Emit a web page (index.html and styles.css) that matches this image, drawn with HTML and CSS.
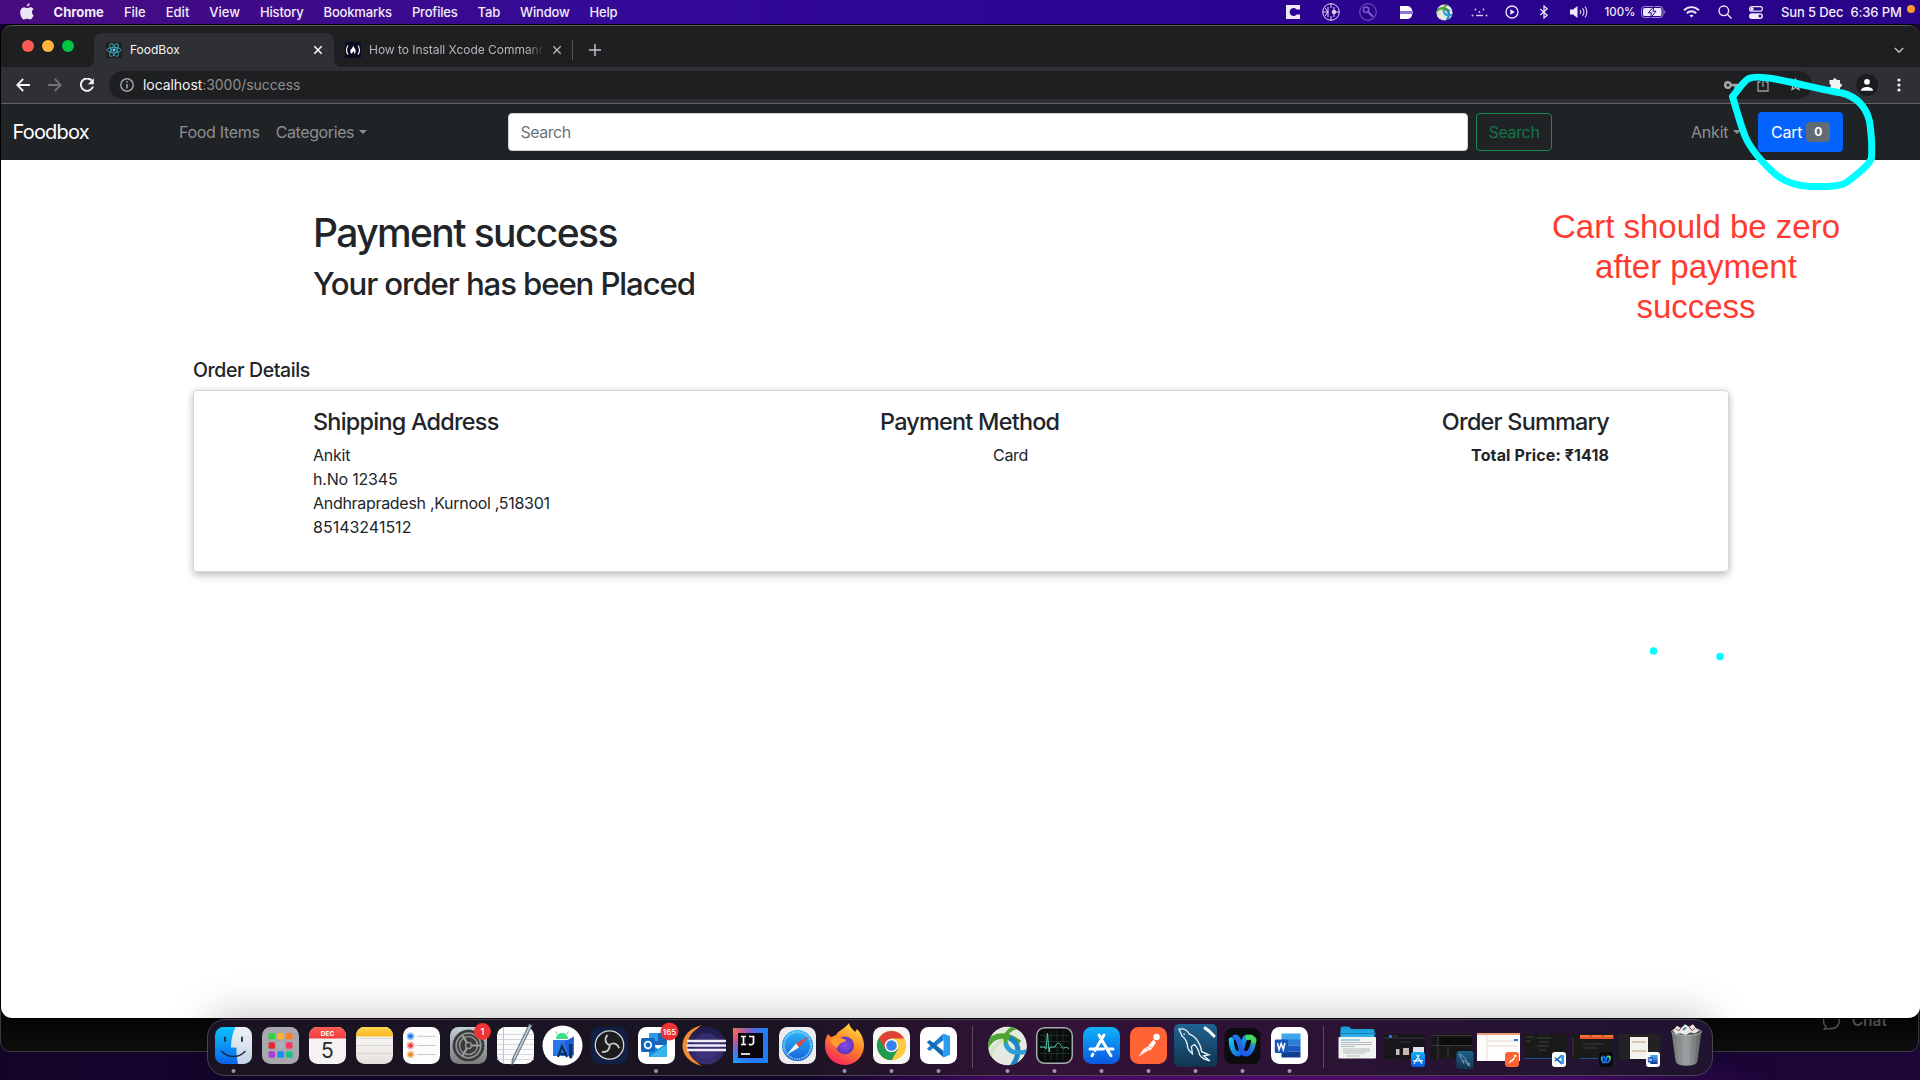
FILE: index.html
```html
<!DOCTYPE html>
<html lang="en">
<head>
<meta charset="utf-8">
<title>FoodBox</title>
<link rel="stylesheet" href="styles.css">
</head>
<body>
<svg class="defs" width="0" height="0" aria-hidden="true">
  <defs>
    <linearGradient id="gFinder" x1="0" y1="0" x2="0" y2="1"><stop offset="0" stop-color="#0cc4fb"/><stop offset="1" stop-color="#0a62ee"/></linearGradient>
    <linearGradient id="gFace" x1="0" y1="0" x2="0" y2="1"><stop offset="0" stop-color="#eef1f6"/><stop offset="1" stop-color="#c5d3e4"/></linearGradient>
    <linearGradient id="gPaper" x1="0" y1="0" x2="0" y2="1"><stop offset="0" stop-color="#ffffff"/><stop offset="1" stop-color="#e4e1dd"/></linearGradient>
    <linearGradient id="gYellow" x1="0" y1="0" x2="0" y2="1"><stop offset="0" stop-color="#fdd44f"/><stop offset="1" stop-color="#fbb91f"/></linearGradient>
    <linearGradient id="gRed" x1="0" y1="0" x2="0" y2="1"><stop offset="0" stop-color="#fb5a55"/><stop offset="1" stop-color="#f03d3c"/></linearGradient>
    <linearGradient id="gPrefs" x1="0" y1="0" x2="0" y2="1"><stop offset="0" stop-color="#c3d0d8"/><stop offset="1" stop-color="#7b7a78"/></linearGradient>
    <linearGradient id="gSafari" x1="0" y1="0" x2="0" y2="1"><stop offset="0" stop-color="#2bb8f7"/><stop offset="1" stop-color="#1463d8"/></linearGradient>
    <linearGradient id="gStore" x1="0" y1="0" x2="0" y2="1"><stop offset="0" stop-color="#0fb3fa"/><stop offset="1" stop-color="#0a58df"/></linearGradient>
    <linearGradient id="gIdea" x1="0" y1="0" x2="1" y2="1"><stop offset="0" stop-color="#fc7a3a"/><stop offset=".25" stop-color="#f23f8a"/><stop offset=".5" stop-color="#5a4df0"/><stop offset="1" stop-color="#0a8cf8"/></linearGradient>
    <linearGradient id="gIdea2" x1="1" y1="0" x2="0" y2="1"><stop offset="0" stop-color="#1486f7"/><stop offset=".55" stop-color="#1486f7" stop-opacity="0"/><stop offset="1" stop-color="#18a8ff"/></linearGradient>
    <linearGradient id="gFox" x1=".8" y1="0" x2=".3" y2="1"><stop offset="0" stop-color="#ffe246"/><stop offset=".45" stop-color="#ff8a27"/><stop offset="1" stop-color="#f5245e"/></linearGradient>
    <radialGradient id="gFoxCore"><stop offset="0" stop-color="#8a4cf0"/><stop offset="1" stop-color="#5b36b8"/></radialGradient>
    <linearGradient id="gSql" x1="0" y1="0" x2="0" y2="1"><stop offset="0" stop-color="#1f6391"/><stop offset="1" stop-color="#123450"/></linearGradient>
    <linearGradient id="gEcl" x1="0" y1="0" x2="0" y2="1"><stop offset="0" stop-color="#1f1b4a"/><stop offset="1" stop-color="#3a2f73"/></linearGradient>
    <linearGradient id="gWebexA" x1="0" y1="0" x2="1" y2="1"><stop offset="0" stop-color="#18c7e8"/><stop offset="1" stop-color="#1556ea"/></linearGradient>
    <linearGradient id="gWebexB" x1="0" y1="1" x2="1" y2="0"><stop offset="0" stop-color="#1a49e6"/><stop offset=".6" stop-color="#2376ee"/><stop offset="1" stop-color="#3bdc5c"/></linearGradient>
    <linearGradient id="gFolder" x1="0" y1="0" x2="0" y2="1"><stop offset="0" stop-color="#0f9ad9"/><stop offset="1" stop-color="#4bc6f4"/></linearGradient>
    <linearGradient id="gBin" x1="0" y1="0" x2="1" y2="0"><stop offset="0" stop-color="#6f7476"/><stop offset=".5" stop-color="#9a9fa0"/><stop offset="1" stop-color="#5b5f61"/></linearGradient>

    <symbol id="swirl" viewBox="0 0 40 40">
      <clipPath id="swirlClip"><circle cx="20" cy="20" r="19.500"/></clipPath>
      <g clip-path="url(#swirlClip)" fill="none">
        <circle cx="20" cy="20" r="19.500" fill="#e6e8e4"/>
        <path d="M3 30C8 14 18 12 26 16" stroke="#d2e3c8" stroke-width="4"/>
        <path d="M-2 23C3 8 18 6 32 17" stroke="#4fa332" stroke-width="5.500"/>
        <path d="M30 1C14 4 15 22 27 27" stroke="#4fa332" stroke-width="4"/>
        <path d="M22 12C34 18 32 30 24 41" stroke="#1b86c4" stroke-width="5"/>
        <path d="M18 17C20 27 30 28 42 25" stroke="#2b9fda" stroke-width="4.500"/>
      </g>
    </symbol>
    <symbol id="code" viewBox="0 0 28 28">
      <path d="M20 1l7 3v20l-7 3z" fill="#2b9df0"/>
      <path d="M20 1v7L5 20l-3-2.400L20 1z" fill="#1d7dcc"/>
      <path d="M20 27v-7L5 8 2 10.400 20 27z" fill="#0f69b5"/>
    </symbol>
    <symbol id="postman" viewBox="0 0 28 28">
      <circle cx="23" cy="4.500" r="3.600" fill="#fff"/>
      <path d="M19.500 7.500l3 3-5.500 8-7 3-7 5 5-8 5-3.500z" fill="#fff"/>
      <path d="M13 14l5 3M11 17l4 3" stroke="#ff6c37" stroke-width=".8"/>
    </symbol>
    <symbol id="astore" viewBox="0 0 28 28">
      <g fill="none" stroke="#fff" stroke-width="3" stroke-linecap="round">
        <path d="M16.500 3.500L7.500 19M11.500 3.500l10 17.500M2.500 17.500h13.500M20 17.500h5.500M5.500 22.500l-1 1.700M21.800 21.500l1.700 2.700"/>
      </g>
    </symbol>
    <symbol id="dolphin" viewBox="0 0 36 36">
      <path d="M2 3c5-1 8 1 10 5 6 2 11 9 12 17l7 3-5 1 6 5c-4-1-8-3-10-6-1-5-3-8-5-10l-3 2 1 7c-4-3-5-6-5-9-1-4-2-6-5-8-1-3-2-4-3-7z" fill="none" stroke="#e8f3fa" stroke-width="1.300"/>
      <circle cx="7" cy="8" r=".8" fill="#fff"/>
    </symbol>
    <symbol id="webex" viewBox="0 0 32 26">
      <g fill="none" stroke-width="5.500" stroke-linecap="round">
        <path d="M4 7c0 8 3 15 7 15 5 0 5-18 10-18" stroke="url(#gWebexA)"/>
        <path d="M8 4c6 0 5 18 11 18 5 0 8-7 9-15" stroke="url(#gWebexB)"/>
        <path d="M22 4.500c3-1 5 0 6 3" stroke="#3fdb5d"/>
      </g>
    </symbol>
    <symbol id="word" viewBox="0 0 28 26">
      <path d="M7 1h19v7H7z" fill="#41a5ee"/><path d="M7 7h19v6H7z" fill="#2b7cd3"/><path d="M7 13h19v6H7z" fill="#185abd"/><path d="M7 19h19v6H7z" fill="#103f91"/>
      <rect x="0" y="7" width="13.500" height="13.500" rx="1.500" fill="#1a56b8"/>
      <path d="M3 10.500l1.600 6.500 2.100-6 2.100 6 1.600-6.500" fill="none" stroke="#fff" stroke-width="1.500"/>
    </symbol>
  </defs>
</svg>

<header class="menubar">
  <svg class="apple" viewBox="0 0 14 17"><path d="M9.700.2c.1 1.700-1.300 3.300-2.900 3.300C6.600 1.900 8.100.4 9.700.2zM12 9c0-1.500.8-2.400 1.600-3-.8-1.200-2-1.700-3.100-1.700-1.400 0-2.200.8-3.200.8S5.200 4.300 4 4.300C1.900 4.400.2 6.200.2 9.400c0 3.400 2.200 7.100 3.900 7.100 1.100 0 1.600-.7 3-.7s1.800.7 2.900.7c1.600 0 3.100-2.600 3.600-4.200C12.600 11.700 12 10.500 12 9z" fill="#ece5f3"/></svg>
  <nav class="menus">
    <b class="menu chrome">Chrome</b><span class="menu">File</span><span class="menu">Edit</span><span class="menu">View</span><span class="menu">History</span><span class="menu">Bookmarks</span><span class="menu">Profiles</span><span class="menu">Tab</span><span class="menu">Window</span><span class="menu">Help</span>
  </nav>
  <div class="status">
    <svg width="14" height="14" viewBox="0 0 14 14"><path d="M0 0h14v4.500h-3.200a4 4 0 1 0 0 5H14V14H0z" fill="#ece8f8"/></svg>
    <svg width="18" height="18" viewBox="0 0 18 18" fill="none" stroke="#ded6f5"><circle cx="9" cy="9" r="8.300"/><path d="M9 1v4M9 13v4M14 9h3M6 4v10M12 4v10M1 9h5M3 5l3 4-3 4"/><circle cx="12" cy="9" r="1.800" fill="#ded6f5"/></svg>
    <svg width="18" height="18" viewBox="0 0 18 18" fill="none" stroke="#7a5fc4"><circle cx="9" cy="9" r="8.300"/><circle cx="7" cy="6.800" r="2.700" stroke-width="1.500"/><path d="M9 8.800l5 5" stroke-width="2"/></svg>
    <svg width="13" height="13" viewBox="0 0 13 13"><path d="M0 0h7c3 0 5 2 5.300 5H0zM0 8h12.300C12 11 10 13 7 13H0z" fill="#fff"/><path d="M0 5h13v3H0z" fill="#8f78cf"/></svg>
    <svg width="17" height="17"><use href="#swirl"/></svg>
    <svg width="17" height="9" viewBox="0 0 17 9" fill="#d8d0f2"><circle cx="4.500" cy="1.500" r=".9"/><circle cx="12.500" cy="1.500" r=".9"/><circle cx="8.500" cy="4" r=".9"/><circle cx="1.500" cy="7.500" r=".9"/><rect x="5" y="6.800" width="7" height="1.400"/><circle cx="15.500" cy="7.500" r=".9"/></svg>
    <svg width="14" height="14" viewBox="0 0 14 14"><circle cx="7" cy="7" r="6" fill="none" stroke="#ece8f8" stroke-width="1.300"/><path d="M5.300 4.200l4.600 2.800-4.600 2.800z" fill="#ece8f8"/></svg>
    <svg width="10" height="14" viewBox="0 0 10 14"><path d="M1.200 4l7 6.200L5 13V1l3.200 2.800-7 6.200" fill="none" stroke="#ece8f8" stroke-width="1.200"/></svg>
    <svg width="18" height="14" viewBox="0 0 18 14"><path d="M0 4.500h3L7.500 1v12L3 9.500H0z" fill="#ece8f8"/><path d="M10 5c.8 1.200.8 2.800 0 4M12.500 3.200c1.700 2.400 1.700 5.200 0 7.600M15 1.500c2.400 3.500 2.400 7.500 0 11" fill="none" stroke="#cfc5ee" stroke-width="1.200"/></svg>
    <span class="power"><span class="pct">100%</span><svg width="25" height="12" viewBox="0 0 25 12"><rect x=".5" y=".5" width="21.500" height="11" rx="3" fill="none" stroke="#9d8bd2"/><rect x="2" y="2" width="18.500" height="8" rx="1.500" fill="#ece8f8"/><path d="M13 0L7.500 6.800h3L9.500 12 15 5.200h-3z" fill="#ece8f8" stroke="#2a0593" stroke-width="1"/><path d="M23.300 4v4c1.300-.6 1.300-3.400 0-4z" fill="#9d8bd2"/></svg></span>
    <svg width="17" height="12" viewBox="0 0 17 12" fill="none" stroke="#ece8f8" stroke-width="1.900"><path d="M1 4.300c4.300-4.200 10.700-4.200 15 0M3.800 7.200c2.700-2.600 6.700-2.600 9.400 0"/><path d="M6.500 9.500c1.200-1.100 2.800-1.100 4 0l-2 2z" fill="#ece8f8" stroke="none"/></svg>
    <svg width="14" height="14" viewBox="0 0 14 14" fill="none" stroke="#ece8f8" stroke-width="1.400"><circle cx="5.800" cy="5.800" r="4.800"/><path d="M9.300 9.300l4.200 4.200"/></svg>
    <svg width="14" height="13" viewBox="0 0 14 13"><rect x=".6" y=".6" width="12.800" height="4.600" rx="2.300" fill="none" stroke="#ece8f8" stroke-width="1.200"/><circle cx="3" cy="2.900" r="1.700" fill="#ece8f8"/><rect y="7.200" width="14" height="5.800" rx="2.900" fill="#ece8f8"/><circle cx="11" cy="10.100" r="1.500" fill="#2a0593"/></svg>
    <span class="clock"><span>Sun 5 Dec</span><span>6:36 PM</span></span>
    <i class="mic"></i>
  </div>
</header>

<section class="backwin">
  <div class="chatbar"><svg width="19" height="19" viewBox="0 0 19 19"><path d="M3 15.500A8 8 0 1 1 7 17.500L1.500 18z" fill="none" stroke="#4c4c4c" stroke-width="1.600"/></svg><span>Chat</span></div>
</section>

<main class="browser">
  <div class="tabstrip">
    <div class="lights"><i class="red"></i><i class="amber"></i><i class="green"></i></div>
    <div class="tab active">
      <svg width="16" height="16" viewBox="0 0 16 16"><rect width="16" height="16" rx="1.500" fill="#1d2023"/><g fill="none" stroke="#3fa9bf" stroke-width=".9"><ellipse cx="8" cy="8" rx="7" ry="2.700"/><ellipse cx="8" cy="8" rx="7" ry="2.700" transform="rotate(60 8 8)"/><ellipse cx="8" cy="8" rx="7" ry="2.700" transform="rotate(120 8 8)"/></g><circle cx="8" cy="8" r="1.400" fill="#61dafb"/></svg>
      <span class="tabname">FoodBox</span>
      <svg class="close" width="10" height="10" viewBox="0 0 10 10"><path d="M1.300 1.300l7.400 7.400M8.700 1.300L1.300 8.700" stroke="#fff" stroke-width="1.500"/></svg>
    </div>
    <div class="tab idle">
      <svg width="16" height="16" viewBox="0 0 16 16"><rect width="16" height="16" fill="#0a0a23"/><path d="M3 3.500C1 6 1 10 3 12.500M13 3.500c2 2.500 2 6.500 0 9" fill="none" stroke="#fff" stroke-width="1.200"/><path d="M8 3.500c.5 2 2.700 3 2.700 5.500 0 1.600-.7 2.500-1.700 3 .6-1.200.2-2-.6-2.700-.8 1-1.600 1.500-1 2.700C6 11.500 5.300 10.600 5.300 9.300 5.300 7 8 6.500 8 3.500z" fill="#fff"/></svg>
      <span class="tabname">How to Install Xcode Command</span>
      <svg class="close" width="10" height="10" viewBox="0 0 10 10"><path d="M1.300 1.300l7.400 7.400M8.700 1.300L1.300 8.700" stroke="#b8babd" stroke-width="1.300"/></svg>
    </div>
    <i class="tabline"></i>
    <svg class="plus" width="12" height="12" viewBox="0 0 12 12"><path d="M6 0v12M0 6h12" stroke="#c3c5c8" stroke-width="1.500"/></svg>
    <svg class="chev" width="10" height="7" viewBox="0 0 10 7"><path d="M.8 1l4.200 4.300L9.200 1" fill="none" stroke="#bcbec1" stroke-width="1.500"/></svg>
  </div>
  <div class="toolbar">
    <span class="tool"><svg width="14" height="14" viewBox="0 0 14 14" fill="none" stroke="#f1f3f4" stroke-width="1.800"><path d="M14 7H1.500M7.200 1L1.200 7l6 6"/></svg></span>
    <span class="tool"><svg width="14" height="14" viewBox="0 0 14 14" fill="none" stroke="#707276" stroke-width="1.800"><path d="M0 7h12.500M6.800 1l6 6-6 6"/></svg></span>
    <span class="tool"><svg width="14" height="14" viewBox="0 0 14 14"><path d="M11.700 2.500A6.200 6.200 0 1 0 13 8.500" fill="none" stroke="#f1f3f4" stroke-width="1.900"/><path d="M13.800.3v6H7.900z" fill="#f1f3f4"/></svg></span>
    <div class="omnibox">
      <svg width="14" height="14" viewBox="0 0 14 14"><circle cx="7" cy="7" r="6.200" fill="none" stroke="#9aa0a6" stroke-width="1.500"/><path d="M7 6v4.500M7 3.300v1.500" stroke="#9aa0a6" stroke-width="1.600"/></svg>
      <span class="url"><span class="host">localhost</span>:3000/success</span>
      <span class="tool"><svg width="14" height="8" viewBox="0 0 14 8"><path d="M4 0a4 4 0 1 0 3.700 5.300h2.600V8h2.400V5.300H14V2.700H7.700A4 4 0 0 0 4 0zm0 2.500a1.500 1.500 0 1 1 0 3 1.500 1.500 0 0 1 0-3z" fill="#a5a7aa"/></svg></span>
      <span class="tool"><svg width="12" height="15" viewBox="0 0 12 15" fill="none" stroke="#9b9da0" stroke-width="1.300"><path d="M3.500 5H1v9h10V5H8.500M6 10V1M3.500 3.300L6 1l2.500 2.300"/></svg></span>
      <span class="tool"><svg width="13" height="13" viewBox="0 0 13 13"><path d="M6.500 1l1.600 3.700 4 .3-3 2.700.9 3.900-3.500-2.100L3 11.600l.9-3.900-3-2.700 4-.3z" fill="none" stroke="#b3b5b8" stroke-width="1.200"/></svg></span>
    </div>
    <span class="tool ext"><svg width="15" height="15" viewBox="0 0 15 15"><path d="M5 3a1.800 1.800 0 0 1 3.600 0H12v3.400a1.900 1.900 0 0 1 0 3.800V14H8.500a1.700 1.700 0 0 0-3.400 0H1.500v-3.500a1.800 1.800 0 0 0 0-3.500V3z" fill="#f1f3f4"/></svg></span>
    <span class="tool"><svg width="22" height="22" viewBox="0 0 22 22"><circle cx="11" cy="11" r="11" fill="#1b1c1e"/><circle cx="11" cy="7.800" r="2.900" fill="#fff"/><path d="M5 16.800c0-5 12-5 12 0z" fill="#fff"/></svg></span>
    <span class="tool"><svg width="4" height="14" viewBox="0 0 4 14" fill="#f1f3f4"><circle cx="2" cy="2" r="1.600"/><circle cx="2" cy="7" r="1.600"/><circle cx="2" cy="12" r="1.600"/></svg></span>
  </div>

  <div class="page">
    <nav class="navbar">
      <span class="brand">Foodbox</span>
      <div class="links"><span class="items">Food Items</span><span class="drop cats">Categories</span></div>
      <div class="field">Search</div>
      <div class="btn-outline">Search</div>
      <span class="drop user">Ankit</span>
      <div class="cart"><span class="cart-label">Cart</span><span class="badge">0</span></div>
    </nav>
    <div class="headline">
      <h1>Payment success</h1>
      <h2>Your order has been Placed</h2>
    </div>
    <section class="order">
      <h5>Order Details</h5>
      <div class="card">
        <div class="ship"><h4>Shipping Address</h4><p class="name">Ankit</p><p class="house">h.No 12345</p><p class="region">Andhrapradesh ,Kurnool ,518301</p><p>85143241512</p></div>
        <div class="pay"><h4>Payment Method</h4><p class="method">Card</p></div>
        <div class="sum"><h4>Order Summary</h4><p class="total">Total Price: ₹1418</p></div>
      </div>
    </section>
  </div>
</main>

<footer class="dock">
  <svg class="app" viewBox="0 0 47 56"><clipPath id="fc"><rect x="5" y="8" width="37" height="37" rx="8.500"/></clipPath><g clip-path="url(#fc)"><rect x="5" y="8" width="37" height="37" fill="url(#gFinder)"/><path d="M25.500 8C22.500 14 21 21 21 28.500h5.500c-.3 6 .3 11 1.500 16.500h14V8z" fill="url(#gFace)"/></g><path d="M15 18.500v3.500M32 18.500v3.500" stroke="#1b2b45" stroke-width="1.800" stroke-linecap="round"/><path d="M12 32.500c6.500 6.800 16.500 6.800 23 0" fill="none" stroke="#1b2b45" stroke-width="1.500" stroke-linecap="round"/><circle cx="23.500" cy="52" r="2" fill="#9b94a6"/></svg>
  <svg class="app" viewBox="0 0 47 56"><rect x="5" y="8" width="37" height="37" rx="8.500" fill="#a9a8ae"/><g><rect x="11.500" y="14" width="6.500" height="6.500" rx="1.500" fill="#30d13f"/><rect x="20.300" y="14" width="6.500" height="6.500" rx="1.500" fill="#fdb52c"/><rect x="29" y="14" width="6.500" height="6.500" rx="1.500" fill="#fc7f28"/><rect x="11.500" y="23.200" width="6.500" height="6.500" rx="1.500" fill="#e02b2f"/><rect x="20.300" y="23.200" width="6.500" height="6.500" rx="1.500" fill="#a6b6bf"/><rect x="29" y="23.200" width="6.500" height="6.500" rx="1.500" fill="#f9385f"/><rect x="11.500" y="32.300" width="6.500" height="6.500" rx="1.500" fill="#a740cf"/><rect x="20.300" y="32.300" width="6.500" height="6.500" rx="1.500" fill="#138ff5"/><rect x="29" y="32.300" width="6.500" height="6.500" rx="1.500" fill="#16c28e"/></g></svg>
  <svg class="app" viewBox="0 0 47 56"><rect x="5" y="8" width="37" height="37" rx="8.500" fill="#f5f3f1"/><path d="M5 19.500v-3A8.500 8.500 0 0 1 13.500 8h20a8.500 8.500 0 0 1 8.500 8.500v3z" fill="url(#gRed)"/><text x="23.500" y="16.500" class="cal-m">DEC</text><text x="23.500" y="38.500" class="cal-d">5</text></svg>
  <svg class="app" viewBox="0 0 47 56"><rect x="5" y="8" width="37" height="37" rx="8.500" fill="url(#gPaper)"/><path d="M5 17.500v-1A8.500 8.500 0 0 1 13.500 8h20a8.500 8.500 0 0 1 8.500 8.500v1z" fill="url(#gYellow)"/><path d="M5 19.300h37" stroke="#b9b5ae" stroke-dasharray="1 1"/><path d="M5 26.500h37M5 34.500h37" stroke="#d9d5cf"/></svg>
  <svg class="app" viewBox="0 0 47 56"><rect x="5" y="8" width="37" height="37" rx="8.500" fill="#fdfdfd"/><path d="M19 17.300h19M19 26.500h19M19 35.500h19" stroke="#c9c9c9"/><g stroke-width="1"><circle cx="12.500" cy="17.300" r="2.500" fill="#1f7cf0"/><circle cx="12.500" cy="17.300" r="3.500" fill="none" stroke="#8db9f0"/><circle cx="12.500" cy="26.500" r="2.500" fill="#ee4444"/><circle cx="12.500" cy="26.500" r="3.500" fill="none" stroke="#f2a5a5"/><circle cx="12.500" cy="35.500" r="2.500" fill="#f38b2b"/><circle cx="12.500" cy="35.500" r="3.500" fill="none" stroke="#f6c593"/></g></svg>
  <svg class="app" viewBox="0 0 47 56"><rect x="5" y="8" width="37" height="37" rx="8.500" fill="url(#gPrefs)"/><circle cx="23.500" cy="26.500" r="15.500" fill="#39393a" stroke="#2a2b2c" stroke-dasharray="1.500 1"/><circle cx="23.500" cy="26.500" r="12.300" fill="none" stroke="#8f9193" stroke-width="1.800"/><circle cx="23.500" cy="26.500" r="9" fill="none" stroke="#8f9193" stroke-width="1.500"/><circle cx="23.500" cy="26.500" r="3" fill="#39393a" stroke="#8f9193" stroke-width="1.500"/><path d="M26.500 26.500h9M22 24l-4.500-7.800M22 29l-4.500 7.800" stroke="#9b9d9f" stroke-width="2.200"/><circle cx="37.500" cy="12.500" r="8.500" fill="#ee3433"/><text x="37.500" y="16" class="bubble">1</text></svg>
  <svg class="app" viewBox="0 0 47 56"><rect x="5" y="8" width="37" height="37" rx="8.500" fill="#fbfbfb"/><path d="M5 15.500h37M5 20.500h37M5 25.500h37M5 30.500h37M5 35.500h37M5 40.500h37" stroke="#d5d8dc"/><path d="M11.500 8v37" stroke="#f0b0b0"/><path d="M37.300 5l2.700 1.500-17 34.500-3.200 5 .5-6z" fill="#8b9fb0" stroke="#55636f" stroke-width=".8"/><path d="M38 7L22 40" stroke="#d9e5ee" stroke-width="1"/></svg>
  <svg class="app" viewBox="0 0 47 56"><circle cx="23.500" cy="26.500" r="20" fill="#fff"/><path d="M14 21h18l3-4v19l-3 1H14z" fill="#2b78ee"/><path d="M25 23l9-5v18l-4 2z" fill="#1a5fd6"/><path d="M17 20c0-8 12-8 12 0z" fill="#3ddc84"/><path d="M18 15l-1.500-2.500M28 15l1.500-2.500" stroke="#3ddc84"/><path d="M19 38l4-11 5 11M19.500 33.500c3 2 6 2 8 0" fill="none" stroke="#0b2c4c" stroke-width="2"/><path d="M30 25h3.500v13l-1.500 2-2-2z" fill="#0b3558"/></svg>
  <svg class="app" viewBox="0 0 47 56"><rect x="5" y="8" width="37" height="37" rx="8.500" fill="#101f42"/><circle cx="23.500" cy="26" r="14.200" fill="#1d1c1e" stroke="#d5d5d7" stroke-width="1.300"/><g fill="none" stroke="#c9c9cb" stroke-width="1.800"><path d="M23.500 26c-5-2-5-7-2-10"/><path d="M23.500 26c-5-2-5-7-2-10" transform="rotate(120 23.500 26)"/><path d="M23.500 26c-5-2-5-7-2-10" transform="rotate(240 23.500 26)"/></g></svg>
  <svg class="app" viewBox="0 0 47 56"><rect x="5" y="8" width="37" height="37" rx="8.500" fill="#fff"/><path d="M16 14h18v12H16z" fill="#1766b8"/><path d="M16 14h9v8h-9z" fill="#2f9be6"/><path d="M34 24v14H16V24l9 6z" fill="#1490df"/><path d="M16 38l18-13v13z" fill="#45c0f5" opacity=".7"/><rect x="8" y="19" width="14" height="14" rx="1.500" fill="#1068c0"/><circle cx="15" cy="26" r="3.300" fill="none" stroke="#fff" stroke-width="1.700"/><circle cx="36.500" cy="12.500" r="9" fill="#ee3433"/><text x="36.500" y="15.700" class="bubble wide">165</text><circle cx="23" cy="52" r="2" fill="#9b94a6"/></svg>
  <svg class="app" viewBox="0 0 47 56"><path d="M22 6C-4 12-4 41 22 47 7 38 7 15 22 6z" fill="#f28a32"/><circle cx="26.500" cy="26.500" r="19" fill="url(#gEcl)"/><circle cx="26.500" cy="27" r="13" fill="#45398c" opacity=".5"/><path d="M7 22h39M6.500 26.500h39.500M7 31h39" stroke="#f0edf8" stroke-width="2.300"/></svg>
  <svg class="app" viewBox="0 0 47 56"><rect x="6" y="9" width="35" height="35" fill="url(#gIdea)"/><rect x="6" y="9" width="35" height="35" fill="url(#gIdea2)"/><rect x="11" y="14" width="25" height="25" fill="#09060b"/><path d="M14 17.500h5M16.500 17.500v8M14 25.500h5M22 17.500h4.500v6c0 2-2.500 3-4.500 1.500" fill="none" stroke="#fff" stroke-width="1.700"/><path d="M14 35h9" stroke="#fff" stroke-width="1.700"/></svg>
  <svg class="app" viewBox="0 0 47 56"><rect x="5" y="8" width="37" height="37" rx="8.500" fill="#ececee"/><circle cx="23.500" cy="26.500" r="15.500" fill="url(#gSafari)"/><circle cx="23.500" cy="26.500" r="13.500" fill="none" stroke="#d6efff" stroke-width="2" stroke-dasharray=".6 1.100"/><path d="M34.500 17.500L22 24.500l3 4z" fill="#ee4338"/><path d="M12.500 36L22 24.500l3 4z" fill="#f3f5f7"/></svg>
  <svg class="app" viewBox="0 0 47 56"><path d="M4 26c0-5 1-8 3-11l3 3 5-2c2-4 6-5 9-8 2-1 3-3 4-4 1 5 4 6 6 9l2-3c5 5 7 11 7 17A19.500 19.500 0 0 1 4 26z" fill="url(#gFox)"/><circle cx="24" cy="26.500" r="9" fill="url(#gFoxCore)"/><path d="M9 20c5-3 10-2 13 0 3 0 4 2 1 3-3 0-5 2-7 6-3-2-6-4-7-9z" fill="#ff9a2b"/><circle cx="23.500" cy="52" r="2" fill="#9b94a6"/></svg>
  <svg class="app" viewBox="0 0 47 56"><rect x="5" y="8" width="37" height="37" rx="8.500" fill="#f6f6f6"/><circle cx="23.500" cy="26.500" r="14.700" fill="#fdca42"/><path d="M23.500 26.500L10.800 19.200A14.700 14.700 0 0 0 23.500 41.200l6.400-11z" fill="#1e9b52"/><path d="M10.800 19.200A14.700 14.700 0 0 1 36.200 19.500H23.500l-6.300 10.600z" fill="#dd4337"/><circle cx="23.500" cy="26.500" r="6.800" fill="#fff"/><circle cx="23.500" cy="26.500" r="5.300" fill="#3a7ff0"/><circle cx="23.500" cy="52" r="2" fill="#9b94a6"/></svg>
  <svg class="app" viewBox="0 0 47 56"><rect x="5" y="8" width="37" height="37" rx="8.500" fill="#fff"/><use href="#code" x="10" y="13.500" width="26" height="26"/><circle cx="23.500" cy="52" r="2" fill="#9b94a6"/></svg>
  <i class="sep"></i>
  <svg class="app" viewBox="0 0 47 56"><use href="#swirl" x="3.500" y="7" width="40" height="40"/><circle cx="23.500" cy="52" r="2" fill="#a394b0"/></svg>
  <svg class="app" viewBox="0 0 47 56"><rect x="5.700" y="8.700" width="35.600" height="35.600" rx="8" fill="#0b0d0d" stroke="#a5acae" stroke-width="1.500"/><path d="M9 16.500h29M9 22.500h29M9 28.500h29M9 34.500h29M14 12v29M20 12v29M26 12v29M32 12v29" stroke="#24403b" stroke-width=".7"/><path d="M9 28h5l1 2 1.500-16 1.500 19 1-5h5c1-3 3-5 5-3s2 5 4 4 3-1 5 1" fill="none" stroke="#56c6ac" stroke-width="1"/><circle cx="23.500" cy="52" r="2" fill="#a394b0"/></svg>
  <svg class="app" viewBox="0 0 47 56"><rect x="5" y="8" width="37" height="37" rx="8.500" fill="url(#gStore)"/><use href="#astore" x="9.500" y="12.500" width="28" height="28"/><circle cx="23.500" cy="52" r="2" fill="#a394b0"/></svg>
  <svg class="app" viewBox="0 0 47 56"><rect x="5" y="8" width="37" height="37" rx="8.500" fill="#ff6336"/><use href="#postman" x="11" y="14" width="25" height="25"/><circle cx="23.500" cy="52" r="2" fill="#a394b0"/></svg>
  <svg class="app" viewBox="0 0 47 56"><rect x="2" y="5" width="43" height="43" rx="5" fill="url(#gSql)"/><use href="#dolphin" x="5" y="7" width="37" height="37"/><path d="M33 9l4 3M36 11l6 6" stroke="#fff" stroke-width="3" stroke-linecap="round"/><circle cx="23.500" cy="52" r="2" fill="#a394b0"/></svg>
  <svg class="app" viewBox="0 0 47 56"><rect x="5.500" y="9" width="36" height="36" rx="8" fill="#0c0c0e"/><use href="#webex" x="8.500" y="14" width="30" height="25"/><circle cx="23.500" cy="52" r="2" fill="#a394b0"/></svg>
  <svg class="app" viewBox="0 0 47 56"><rect x="5" y="8" width="37" height="37" rx="8.500" fill="#fff"/><use href="#word" x="8.500" y="13.500" width="28" height="26"/><circle cx="23.500" cy="52" r="2" fill="#a394b0"/></svg>
  <i class="sep"></i>
  <svg class="app" viewBox="0 0 47 56"><path d="M6.500 9.500q0-2 2-2h6l3 2.500h21q2 0 2 2v14h-34z" fill="url(#gFolder)"/><path d="M6 14.500h36" stroke="#0b7fb9" stroke-width="1"/><rect x="4.500" y="18" width="37.500" height="21.500" rx="1" fill="#f1f3f4"/><path d="M7 21h19" stroke="#5fb2b8" stroke-width="1"/><path d="M7 23.500h31M7 25.500h31M7 27.500h14M9 30h27M9 32h27M9 34h22M12 37h14" stroke="#a9acae" stroke-width=".8"/></svg>
  <svg class="app thumb" viewBox="0 0 47 56"><rect x="2.500" y="21" width="42" height="25" fill="#17161c"/><path d="M3 25h41M7 23h10M20 29h10" stroke="#3a3944"/><rect x="8" y="22" width="3" height="3" fill="#1b6fe0"/><path d="M15 36h3.500v6H15zM22 35h6v7h-6z" fill="#c9b7b4"/><path d="M32 34h11v9H32z" fill="#dfe2e8"/><rect x="30" y="39" width="14" height="15" rx="3" fill="url(#gStore)"/><use href="#astore" x="31.500" y="41" width="11" height="11"/></svg>
  <svg class="app thumb" viewBox="0 0 47 56"><rect x="2.500" y="21" width="42" height="25" fill="#18181a"/><path d="M3 22.500h41M3 32.500h41M10 24v22M20 33v12" stroke="#3a3a3c"/><path d="M11 25h33v7H11z" fill="#0d0d0e"/><rect x="28.500" y="38" width="17" height="18" rx="3" fill="url(#gSql)"/><use href="#dolphin" x="30.500" y="40" width="13" height="14"/></svg>
  <svg class="app thumb" viewBox="0 0 47 56"><rect x="2" y="20" width="43" height="28" fill="#fdfdfd"/><path d="M2 21h43" stroke="#ef9f74" stroke-width="2"/><path d="M12 23v24M13 28h30M13 33h30" stroke="#ead9cf"/><path d="M39 26h4v2h-4z" fill="#2a6ff0"/><rect x="30" y="39" width="14" height="15" rx="3" fill="#ff6336"/><use href="#postman" x="32" y="41.500" width="10" height="10"/></svg>
  <svg class="app thumb" viewBox="0 0 47 56"><rect x="2.500" y="21" width="42" height="25" fill="#1a1a1b"/><path d="M4 24h8M4 28h5M15 25h14M17 29h9M15 33h12M17 37h7" stroke="#3f4641"/><path d="M2.500 45.500h27" stroke="#14548c"/><rect x="30" y="39" width="14" height="15" rx="3" fill="#fff"/><use href="#code" x="31.500" y="41" width="11" height="11"/></svg>
  <svg class="app thumb" viewBox="0 0 47 56"><rect x="2.500" y="21" width="42" height="25" fill="#1c1b1c"/><path d="M11 22h33.500v4H11z" fill="#e8552d"/><path d="M11 23h33" stroke="#f59a4a" stroke-dasharray="9 3"/><path d="M4 25v18M14 31h20M14 35h14" stroke="#3b3b3d"/><path d="M11 45.500h18" stroke="#14548c"/><rect x="30" y="39" width="14" height="15" rx="3" fill="#0c0c0e"/><use href="#webex" x="31.500" y="42" width="11" height="9"/></svg>
  <svg class="app thumb" viewBox="0 0 47 56"><rect x="2.500" y="21" width="42" height="25" fill="#222124"/><rect x="14" y="24" width="18" height="22" fill="#f4f2ee"/><path d="M16 29h14M16 38h14" stroke="#cdbb9a" stroke-width="1.500"/><rect x="30" y="39" width="14" height="15" rx="3" fill="#fff"/><use href="#word" x="31.500" y="41.500" width="11" height="10"/></svg>
  <svg class="app" viewBox="0 0 47 56"><g transform="translate(0 1) scale(1 .83)"><path d="M8.500 14h30l-4 35q-.5 6-11 6t-11-6z" fill="url(#gBin)"/><path d="M14 18l3 34M20 18l1.500 35M27 18l-1.500 35M33 18l-3 34" stroke="#ffffff" stroke-opacity=".1"/><ellipse cx="23.500" cy="14" rx="15" ry="4.500" fill="#4b4e50" stroke="#b3b7b8"/><path d="M10 13l4-6 4 3 4-5 4 3 4-3 3 5 3 3-4 3-5-1-4 3-6-2-4 1z" fill="#e9e8e6"/><path d="M13 11l3 2 2-4M26 8l3 5 3-3" stroke="#7b4a3c" fill="none"/><path d="M20 12l3-3" stroke="#2f7fa8" stroke-width="2"/></g></svg>
</footer>

<p class="note">Cart should be zero after payment success</p>
<svg class="ink" viewBox="0 0 1920 1080" fill="none"><path d="M1732.500 96.500C1738 91 1743 81 1749 78.500C1753 76.500 1762 76.800 1775 79C1797 83 1823 90 1842 93C1857 97 1866 107 1869.500 121C1871.500 135 1872 150 1871.500 158C1869 166 1856 175 1847 182C1840 187 1826 186.500 1811 186.500C1797 186 1785 182 1775 174C1763 163 1750 148 1745 136C1740 123 1736 108 1732.500 96.500Z" stroke="#00fdff" stroke-width="7" stroke-linejoin="round"/><circle cx="1653.500" cy="651" r="3.700" fill="#00fdff"/><circle cx="1720" cy="656.500" r="3.700" fill="#00fdff"/></svg>
</body>
</html>
```

FILE: styles.css
```css
* { box-sizing: border-box; }
html, body { margin: 0; }
body {
  position: relative;
  width: 1920px;
  height: 1080px;
  overflow: hidden;
  font-family: Inter, "Liberation Sans", sans-serif;
  background:
    radial-gradient(ellipse 480px 60px at 1290px 1085px, #5a0c78 0, #4a0a6c 60%, rgba(60, 8, 90, 0) 100%),
    linear-gradient(90deg, #13052a, #14062e 50%, #1c0638);
}
svg { display: block; flex: none; }
h1, h2, h4, h5, p { margin: 0; font-weight: 540; }
.defs { position: absolute; }

/* menu bar */
.menubar {
  height: 24px;
  display: flex;
  align-items: center;
  background: linear-gradient(90deg, #480b80 0, #3d0b8c 320px, #330a98 640px, #2c0492 1200px, #290389 1920px);
  color: #f1ecf8;
  font-size: 13px;
  font-weight: 500;
}
.apple { width: 14px; height: 17px; margin: 0 19.600px 2px 20px; }
.menus { display: flex; gap: 20px; flex: 1; }
.menu { white-space: nowrap; }
.menu:nth-child(n+5) { letter-spacing: -.18px; }
.chrome { font-weight: 700; }
.status {
  width: 646px;
  display: grid;
  grid-template-columns: 38px 37px 38px 38px 38px 32px 34px 30px 40px 72px 40px 28px 34px 131px 14px;
  align-items: center;
  justify-items: center;
}
.power { display: flex; align-items: center; gap: 5px; }
.pct { font-size: 11.5px; }
.clock { justify-self: start; padding-left: 8px; display: flex; gap: 7px; white-space: nowrap; letter-spacing: -.12px; }
.mic { width: 8px; height: 8px; border-radius: 50%; background: #ff9a2e; margin-bottom: 6px; }

/* window behind the browser */
.backwin {
  position: absolute;
  left: 0; top: 900px;
  width: 1919px; height: 152px;
  background: linear-gradient(#050505 118px, #0e0e0e);
  border: 1px solid #3b3b3d;
  border-radius: 0 0 10px 10px;
  display: flex;
  justify-content: flex-end;
}
.chatbar { display: flex; gap: 10px; align-items: center; height: 20px; margin: 109px 31px 0 0; color: #4c4c4c; font-size: 15.500px; font-weight: 600; }

/* browser window */
.browser {
  position: absolute;
  left: 0; top: 24px;
  width: 1920px; height: 995px;
  border: 1px solid #000;
  border-right: 0;
  border-radius: 11px 11px 12px 12px;
  background: #1e1f21;
  overflow: hidden;
}
.tabstrip {
  height: 42px;
  border-top: 1px solid #5b5c5e;
  border-radius: 10px 10px 0 0;
  display: flex;
  align-items: center;
  padding: 7px 0 0 21px;
}
.lights { display: flex; gap: 8px; width: 72px; margin-top: -8px; }
.lights i { width: 12px; height: 12px; border-radius: 50%; }
.red { background: #ff5951; }
.amber { background: #ffb43c; }
.green { background: #00c53e; }
.tab { height: 34px; display: flex; align-items: center; font-size: 12px; position: relative; }
.tabname { white-space: nowrap; overflow: hidden; margin-top: -1px; }
.active { width: 240px; background: #2f3034; border-radius: 8px 8px 0 0; color: #f3f4f5; padding: 0 11px 0 12px; gap: 8px; }
.active .close { margin-left: auto; }
.active::before, .active::after {
  content: ""; position: absolute; bottom: 0; width: 8px; height: 8px;
}
.active::before { left: -8px; background: radial-gradient(circle at 0 0, transparent 8px, #2f3034 8.5px); }
.active::after { right: -8px; background: radial-gradient(circle at 100% 0, transparent 8px, #2f3034 8.5px); }
.idle { width: 238px; padding: 0 10px 0 11px; gap: 8px; color: #b4b6b9; }
.idle .tabname { width: 177px; letter-spacing: -.03px; mask-image: linear-gradient(90deg, #000 90%, transparent); }
.tabline { width: 1px; height: 20px; background: #515255; }
.plus { margin-left: 16px; }
.chev { margin-left: auto; margin-right: 16px; }

.toolbar {
  height: 37px;
  background: #2f3034;
  border-bottom: 1px solid #616265;
  display: flex;
  align-items: center;
  padding: 0 5px 1px 6px;
}
.tool { width: 32px; height: 28px; display: flex; align-items: center; justify-content: center; flex: none; }
.omnibox {
  flex: 1;
  height: 28px;
  margin-left: 6px;
  border-radius: 14px;
  background: #1e1f21;
  display: flex;
  align-items: center;
  padding: 0 1px 0 11px;
}
.url { flex: 1; margin-left: 9px; font-size: 14px; letter-spacing: -.06px; color: #8c8e91; }
.host { color: #f1f3f4; }
.ext { margin-left: 7px; }

/* page */
.page { background: #fff; height: 915px; color: #212529; }
.navbar {
  height: 56px;
  background: #1f2326;
  display: grid;
  grid-template-columns: 166.500px 329px 960px 76px 147px 67px 85px;
  align-items: center;
  padding-left: 11.500px;
  color: #8d8f91;
  font-size: 16px;
}
.brand { color: #fff; font-size: 20px; letter-spacing: -.8px; }
.links { display: flex; gap: 16px; }
.items { letter-spacing: -.3px; }
.cats { letter-spacing: -.4px; }
.drop { display: flex; align-items: center; }
.drop::after { content: ""; margin-left: 5px; border: 4px solid transparent; border-top-color: currentColor; border-bottom: 0; }
.field { height: 38px; background: #fff; border: 1px solid #ced4da; border-radius: 4px; padding: 6px 11.500px; line-height: 24px; letter-spacing: -.5px; color: #6c757d; }
.btn-outline { height: 38px; width: 76px; margin-left: 8px; border: 1px solid #198754; border-radius: 4px; color: #157347; line-height: 36px; letter-spacing: -.35px; text-align: center; }
.user { grid-column: 6; letter-spacing: -.2px; }
.cart { height: 40px; border-radius: 4px; background: #0563fd; color: #fff; display: flex; align-items: center; padding: 0 0 1px 13px; gap: 4px; }
.cart-label { letter-spacing: -.25px; }
.badge { width: 24px; height: 20px; border-radius: 4px; background: #616b73; font-size: 12px; font-weight: 700; text-align: center; line-height: 20px; }

.headline { padding: 49px 0 0 312px; }
h1 { font-size: 39px; line-height: 48px; letter-spacing: -1.600px; margin-bottom: 8px; }
h2 { font-size: 31.200px; line-height: 38.400px; letter-spacing: -1.120px; }
.order { margin: 55px 191px 0 192px; }
h5 { font-size: 19.500px; line-height: 24px; letter-spacing: -.4px; margin-bottom: 8px; }
.card {
  height: 182px;
  border: 1px solid #d6d6d6;
  border-radius: 4px;
  box-shadow: 0 4px 8px rgba(0, 0, 0, .2), 0 0 6px rgba(0, 0, 0, .1);
  display: flex;
  padding: 17px 119px 0;
  font-size: 16px;
  line-height: 24px;
}
h4 { font-size: 23.400px; line-height: 28.800px; letter-spacing: -.750px; margin-bottom: 6px; }
.card p { font-weight: 400; }
.ship { width: 567px; }
.name { letter-spacing: -.25px; }
.house { letter-spacing: -.2px; }
.region { letter-spacing: -.3px; }
.method { margin-left: 113px; letter-spacing: -.3px; }
.sum { margin-left: auto; text-align: right; }
.card .total { font-weight: 700; letter-spacing: .13px; }

/* dock */
.dock {
  position: absolute;
  left: 207px; top: 1019px;
  width: 1506px; height: 57px;
  border: 1px solid #4a4352;
  border-radius: 18px;
  background: linear-gradient(90deg, #1a1422 0, #1b1423 38%, #331238 56%, #2b1334 75%, #1f1430 100%);
  box-shadow: 0 -2px 44px rgba(0, 0, 0, .24);
  display: flex;
  padding-left: 2px;
}
.app { width: 47px; height: 56px; margin-top: -1px; overflow: visible; }
.thumb { margin-top: -7px; }
.sep { width: 21.500px; display: flex; justify-content: center; }
.sep::after { content: ""; width: 1px; height: 42px; margin-top: 6px; background: #574c60; }
.cal-m { font: 700 6.500px Inter, sans-serif; fill: #fff; text-anchor: middle; }
.cal-d { font: 400 21px Inter, sans-serif; fill: #2b2b2b; text-anchor: middle; }
.bubble { font: 500 9.500px Inter, sans-serif; fill: #fff; text-anchor: middle; }
.wide { font-size: 8px; }

/* annotations */
.note {
  position: absolute;
  left: 1536px; top: 207px;
  width: 320px;
  font: 400 33px/40px "Liberation Sans", sans-serif;
  text-align: center;
  color: #ff3b30;
}
.ink { position: absolute; left: 0; top: 0; width: 1920px; height: 1080px; pointer-events: none; }
```
